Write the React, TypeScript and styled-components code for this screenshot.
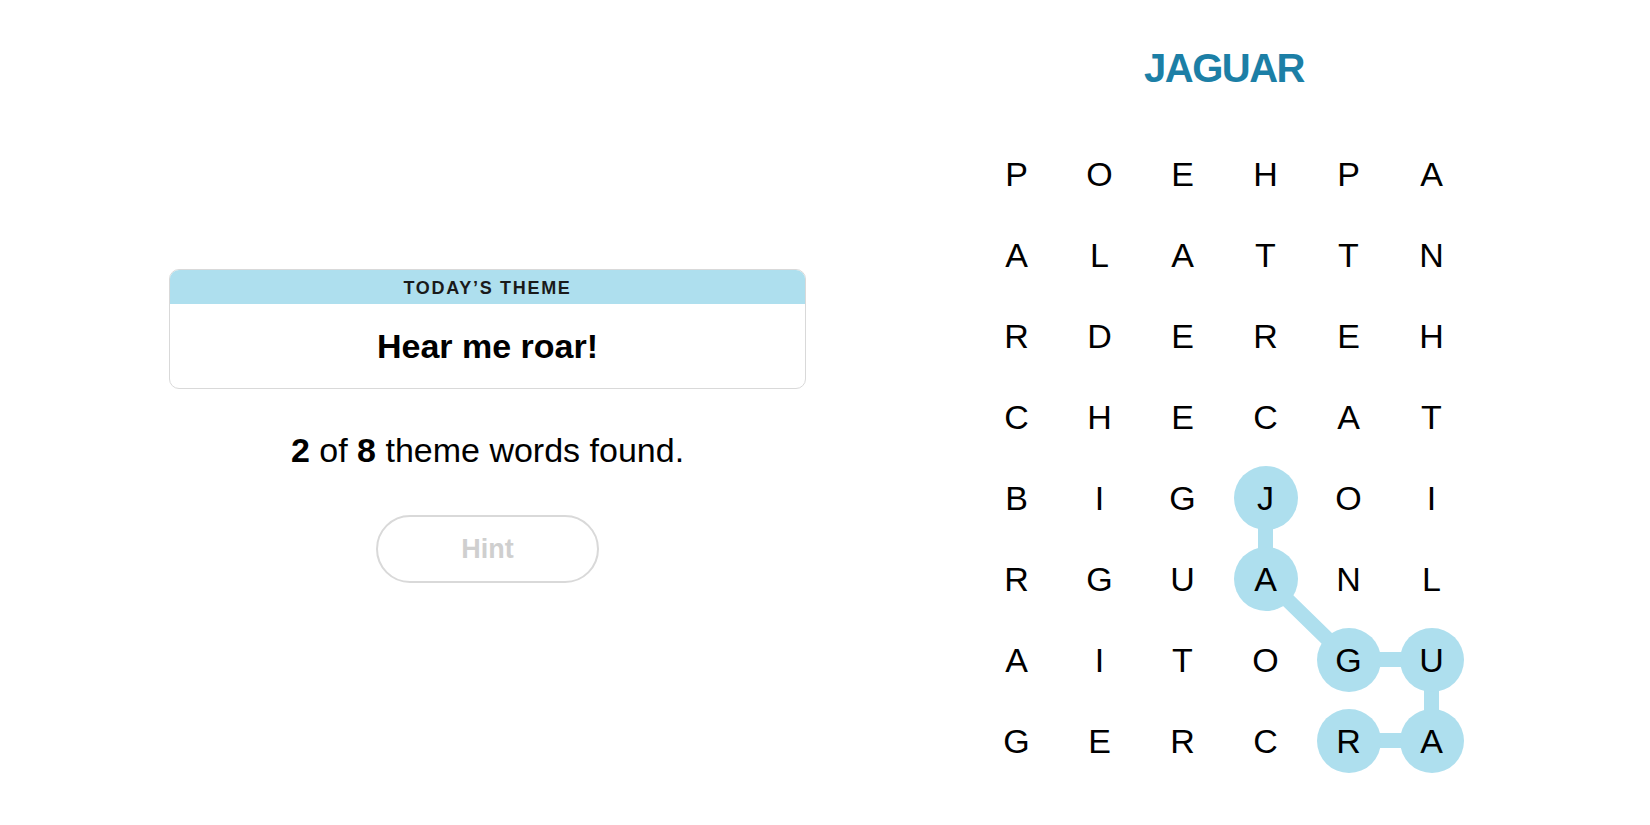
import React from "react";
import styled, { createGlobalStyle } from "styled-components";

const GlobalStyle = createGlobalStyle`
  html, body {
    margin: 0;
    padding: 0;
    background: #ffffff;
    font-family: "Liberation Sans", Arial, sans-serif;
    color: #000;
  }
  * { box-sizing: border-box; }
`;

const CELL_W = 83;
const CELL_H = 81;
const HIGHLIGHT = "#aedfee";

const Page = styled.div`
  display: flex;
  flex-direction: row;
  width: 1650px;
  height: 825px;
`;

const LeftPanel = styled.section`
  width: 975px;
  display: flex;
  flex-direction: column;
  align-items: center;
  padding-top: 269px;
`;

const ThemeCard = styled.div`
  width: 637px;
  border: 1.5px solid #d9d9d9;
  border-radius: 10px;
  overflow: hidden;
  display: flex;
  flex-direction: column;
`;

const ThemeHeader = styled.div`
  height: 34px;
  background: ${HIGHLIGHT};
  display: flex;
  align-items: center;
  justify-content: center;
  font-size: 18px;
  font-weight: 700;
  letter-spacing: 1.7px;
  color: #1a1a1a;
  padding-top: 2px;
`;

const ThemeBody = styled.div`
  height: 84px;
  display: flex;
  align-items: center;
  justify-content: center;
  font-size: 34px;
  font-weight: 700;
  color: #000;
`;

const FoundText = styled.p`
  margin: 41px 0 0;
  line-height: 40px;
  font-size: 34px;
  color: #000;
  b { font-weight: 700; }
`;

const HintButton = styled.button`
  margin-top: 45px;
  width: 223px;
  height: 68px;
  border-radius: 34px;
  border: 2px solid #d9d9d9;
  background: #fff;
  color: #cfcfcf;
  font-family: "Liberation Sans", Arial, sans-serif;
  font-size: 27px;
  font-weight: 700;
  display: flex;
  align-items: center;
  justify-content: center;
`;

const RightPanel = styled.section`
  width: ${CELL_W * 6}px;
  display: flex;
  flex-direction: column;
  align-items: center;
  padding-top: 43px;
`;

const Title = styled.h1`
  margin: 0;
  height: 50px;
  line-height: 50px;
  font-size: 40px;
  font-weight: 700;
  letter-spacing: -1.5px;
  color: #1c7fa6;
`;

const Board = styled.div`
  position: relative;
  margin-top: 40px;
  display: grid;
  grid-template-columns: repeat(6, ${CELL_W}px);
  grid-template-rows: repeat(8, ${CELL_H}px);
`;

const Connectors = styled.svg`
  position: absolute;
  left: 0;
  top: 0;
  z-index: 0;
  pointer-events: none;
`;

const Cell = styled.div`
  position: relative;
  z-index: 1;
  display: flex;
  align-items: center;
  justify-content: center;
`;

const Letter = styled.span<{ $found: boolean }>`
  width: 64px;
  height: 64px;
  border-radius: 50%;
  background: ${(p) => (p.$found ? HIGHLIGHT : "transparent")};
  display: flex;
  align-items: center;
  justify-content: center;
  font-size: 34px;
  font-weight: 400;
  color: #000;
  padding-top: 2px;
`;

const rows = [
  "POEHPA",
  "ALATTN",
  "RDEREH",
  "CHECAT",
  "BIGJOI",
  "RGUANL",
  "AITOGU",
  "GERCRA",
];

const path: [number, number][] = [
  [4, 3],
  [5, 3],
  [6, 4],
  [6, 5],
  [7, 5],
  [7, 4],
];

const isFound = (r: number, c: number) =>
  path.some(([pr, pc]) => pr === r && pc === c);

const center = ([r, c]: [number, number]) => ({
  x: c * CELL_W + CELL_W / 2,
  y: r * CELL_H + CELL_H / 2,
});

export default function App() {
  const pts = path.map(center);
  return (
    <>
      <GlobalStyle />
      <Page>
        <LeftPanel>
          <ThemeCard>
            <ThemeHeader>TODAY’S THEME</ThemeHeader>
            <ThemeBody>Hear me roar!</ThemeBody>
          </ThemeCard>
          <FoundText>
            <b>2</b> of <b>8</b> theme words found.
          </FoundText>
          <HintButton>Hint</HintButton>
        </LeftPanel>
        <RightPanel>
          <Title>JAGUAR</Title>
          <Board>
            <Connectors width={CELL_W * 6} height={CELL_H * 8}>
              <polyline
                points={pts.map((p) => `${p.x},${p.y}`).join(" ")}
                fill="none"
                stroke={HIGHLIGHT}
                strokeWidth={15}
                strokeLinejoin="round"
              />
            </Connectors>
            {rows.map((row, r) =>
              row.split("").map((ch, c) => (
                <Cell key={`${r}-${c}`}>
                  <Letter $found={isFound(r, c)}>{ch}</Letter>
                </Cell>
              ))
            )}
          </Board>
        </RightPanel>
      </Page>
    </>
  );
}
